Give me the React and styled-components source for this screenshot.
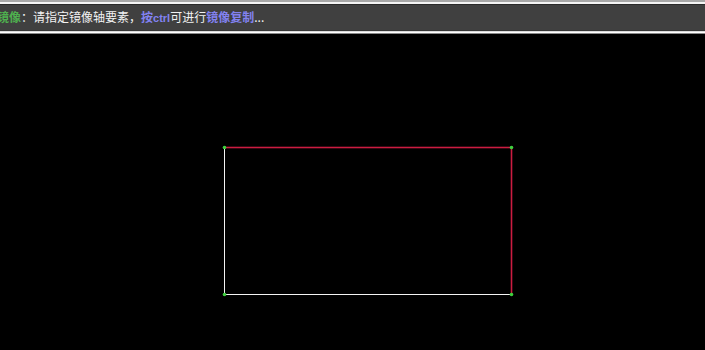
import React from 'react';
import styled, { createGlobalStyle } from 'styled-components';

const GlobalStyle = createGlobalStyle`
  html, body {
    margin: 0;
    padding: 0;
    background: #000;
  }
  body {
    font-family: "Noto Sans CJK SC", "Liberation Sans", sans-serif;
  }
`;

const Page = styled.div`
  width: 705px;
  height: 350px;
  display: flex;
  flex-direction: column;
  background: #000;
  overflow: hidden;
`;

const TopRule = styled.div`
  flex-shrink: 0;
  height: 5px;
  background: linear-gradient(#a8a8a8 0 2px, #f4f4f4 2px 4px, #2a2a2a 4px 5px);
`;

const StatusBar = styled.div`
  flex-shrink: 0;
  height: 26px;
  display: flex;
  align-items: center;
  background: #404040;
  border-bottom: 1px solid #383838;
  box-sizing: border-box;
`;

const BottomRule = styled.div`
  flex-shrink: 0;
  height: 3px;
  background: linear-gradient(#dcdcdc 0 1px, #ffffff 1px 2px, #8a8a8a 2px 3px);
`;

const Message = styled.div`
  margin-left: -3px;
  font-size: 12px;
  line-height: 14px;
  color: #f2f2f2;
  white-space: nowrap;
`;

const Hint = styled.span`
  font-weight: bold;
  color: ${(p) => (p.$tone === 'green' ? '#4fb04f' : '#8282f0')};
  font-size: ${(p) => (p.$small ? '11px' : '12px')};
  font-family: ${(p) =>
    p.$small ? '"Liberation Sans", sans-serif' : 'inherit'};
`;

const Canvas = styled.div`
  flex: 1;
  min-height: 0;
  overflow: hidden;
  background: #000;

  svg {
    display: block;
  }
`;

const corners = [
  [224, 113],
  [511, 113],
  [224, 260],
  [511, 260],
];

export default function App() {
  return (
    <Page>
      <GlobalStyle />
      <TopRule />
      <StatusBar>
        <Message>
          <Hint $tone="green">镜像</Hint>：请指定镜像轴要素，
          <Hint>按</Hint>
          <Hint $small>ctrl</Hint>可进行<Hint>镜像复制</Hint>...
        </Message>
      </StatusBar>
      <BottomRule />
      <Canvas>
        <svg width="705" height="316" viewBox="0 0 705 316">
          <g shapeRendering="crispEdges">
            {/* soft halo around the red edges */}
            <rect x="224" y="112" width="288" height="3" fill="#3c0814" />
            <rect x="510" y="112" width="3" height="149" fill="#3c0814" />
            <rect x="224" y="113" width="288" height="1" fill="#cc1c40" />
            <rect x="511" y="113" width="1" height="148" fill="#cc1c40" />
            <rect x="224" y="113" width="1" height="148" fill="#f4f4f4" />
            <rect x="224" y="260" width="288" height="1" fill="#f4f4f4" />
          </g>
          {corners.map(([x, y]) => (
            <circle key={`${x}-${y}`} cx={x + 0.5} cy={y + 0.5} r="1.8" fill="#3ecf3e" />
          ))}
        </svg>
      </Canvas>
    </Page>
  );
}
